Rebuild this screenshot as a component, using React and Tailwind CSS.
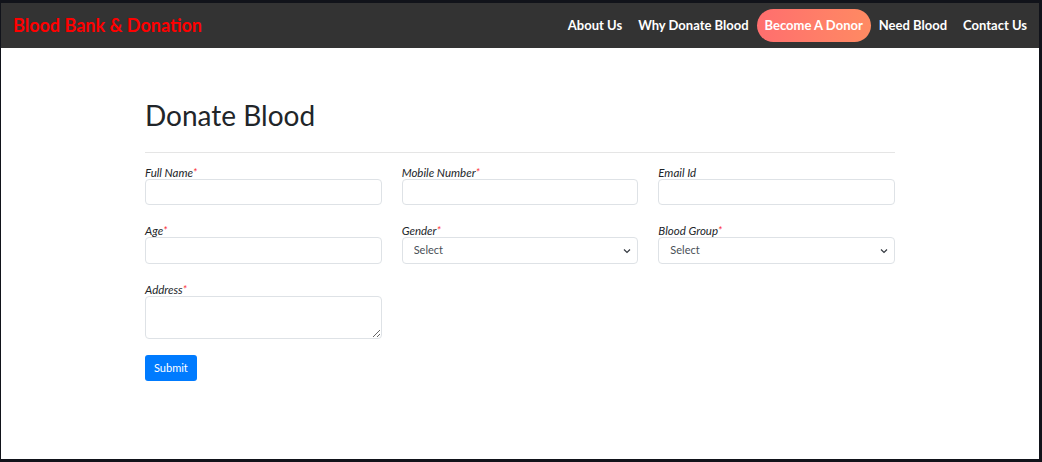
import React from 'react';

const Label = ({ children, required }) => (
    <label className="block text-[11.5px] italic text-[#212529] leading-[13px] mb-0">
        {children}
        {required && <span className="text-red-500">*</span>}
    </label>
);

const Field = ({ label, required, children }) => (
    <div className="flex flex-col">
        <Label required={required}>{label}</Label>
        {children}
    </div>
);

const inputCls = "block w-full h-[26px] rounded-[4px] border border-[#dee2e6] bg-white px-2 text-[11px] outline-none";

const SelectBox = () => (
    <div className="relative">
        <select className={`${inputCls} h-[27px] appearance-none text-[#495057] px-[11px]`}>
            <option>Select</option>
        </select>
        <svg className="absolute right-[7px] top-[11px]" width="8" height="6" viewBox="0 0 8 6" fill="none">
            <path d="M1 1.5 L4 4.5 L7 1.5" stroke="#343a40" strokeWidth="1.2" />
        </svg>
    </div>
);

const App = () => {
    const links = ['About Us', 'Why Donate Blood', 'Become A Donor', 'Need Blood', 'Contact Us'];
    return (
        <div className="w-[1042px] h-[462px] bg-[#11131a] pt-[3px] pl-[1px] pr-[3px] pb-[3px] overflow-hidden" style={{ fontFamily: 'Lato, "Open Sans", sans-serif' }}>
            <div className="h-full flex flex-col bg-white">
                {/* Navbar */}
                <nav className="h-[45px] shrink-0 bg-[#333333] flex items-center justify-between pl-[12px] pr-[4px]">
                    <h1 className="text-[18px] font-bold text-[#ff0000]">Blood Bank &amp; Donation</h1>
                    <ul className="flex items-center">
                        {links.map((l) => (
                            <li key={l}>
                                {l === 'Become A Donor' ? (
                                    <a className="block px-[8px] h-[33px] leading-[33px] rounded-full text-[13px] font-bold text-white bg-gradient-to-r from-[#ff6e6e] to-[#ff8a62]">{l}</a>
                                ) : (
                                    <a className="block px-[8px] text-[13px] font-bold text-white">{l}</a>
                                )}
                            </li>
                        ))}
                    </ul>
                </nav>

                {/* Form */}
                <div className="w-[750px] ml-[144px] pt-[50px]">
                    <h2 className="text-[28px] text-[#212529] leading-[34px]">Donate Blood</h2>
                    <hr className="mt-[20px] mb-[13px] border-[#e5e5e5]" />
                    <div className="grid grid-cols-3 gap-x-[20px] gap-y-[19px]">
                        <Field label="Full Name" required><input className={inputCls} /></Field>
                        <Field label="Mobile Number" required><input className={inputCls} /></Field>
                        <Field label="Email Id"><input className={inputCls} /></Field>
                        <Field label="Age" required><input className={`${inputCls} h-[27px]`} /></Field>
                        <Field label="Gender" required><SelectBox /></Field>
                        <Field label="Blood Group" required><SelectBox /></Field>
                        <Field label="Address" required>
                            <textarea className="w-full h-[43px] rounded-[4px] border border-[#dee2e6] bg-white px-2 text-[11px] outline-none block" />
                        </Field>
                    </div>
                    <button className="mt-[16px] h-[26px] px-[9px] rounded-[3px] bg-[#007bff] text-white text-[11px]">Submit</button>
                </div>
            </div>
        </div>
    );
};

export default App;
